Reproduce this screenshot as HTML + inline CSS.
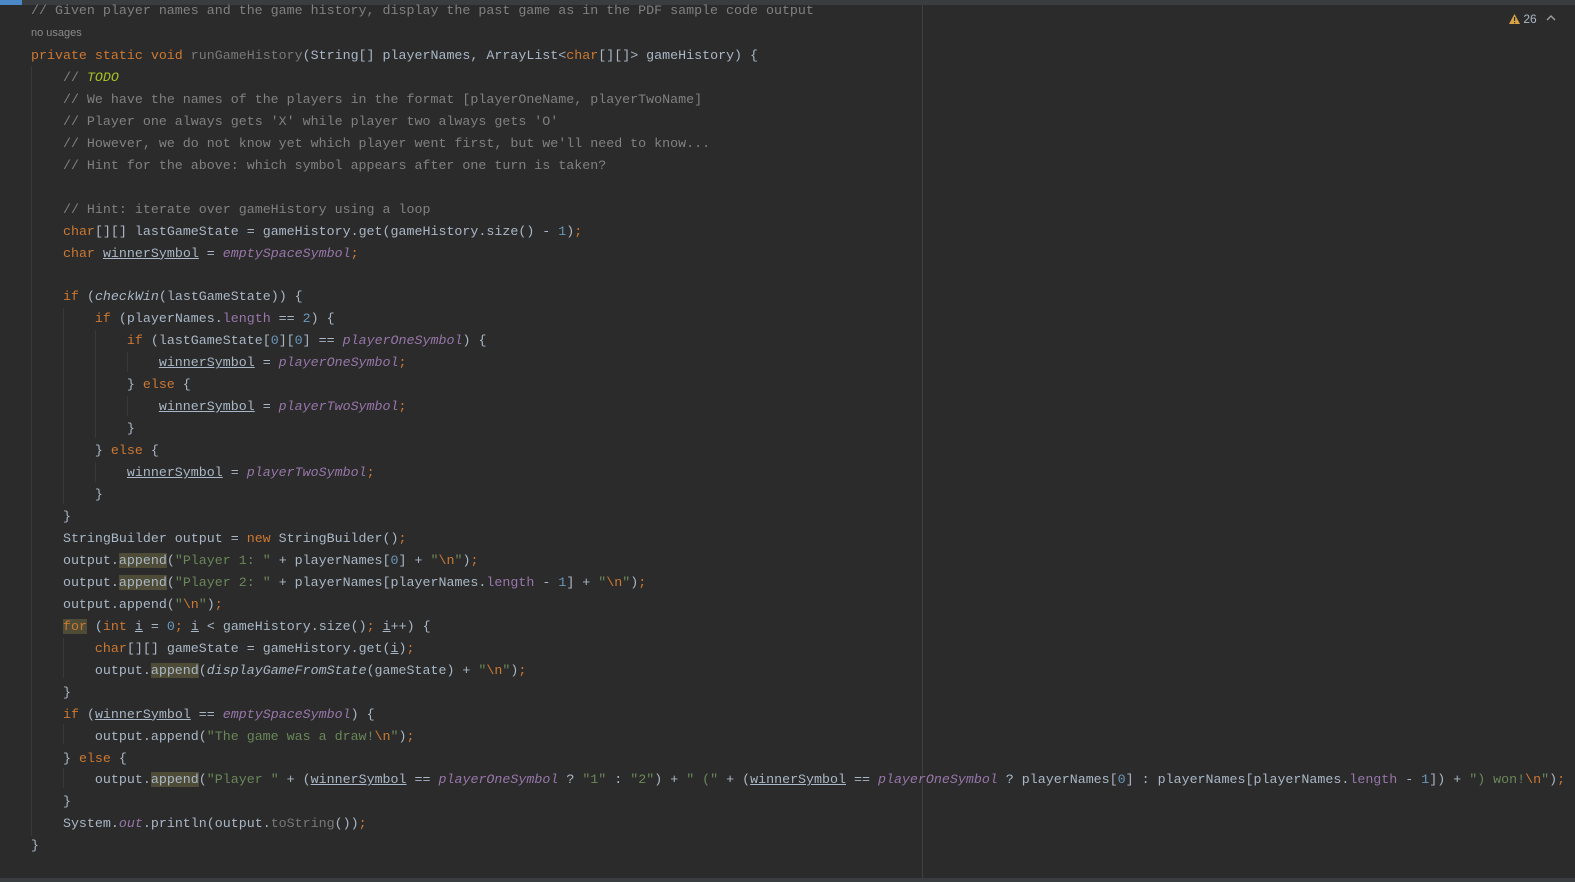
<!DOCTYPE html>
<html><head><meta charset="utf-8"><style>
html,body{margin:0;padding:0;background:#2b2b2b;width:1575px;height:882px;overflow:hidden;position:relative}
.top{position:absolute;left:0;top:0;width:1575px;height:5px;background:#3a3d40}
.topb{position:absolute;left:0;top:0;width:22px;height:5px;background:#4a88c7}
.bot{position:absolute;left:0;top:878px;width:1575px;height:4px;background:#3a3d40}
.margin{position:absolute;left:922px;top:5px;width:1px;height:873px;background:#3f3f3f}
.g{position:absolute;width:1px;background:#393939}
pre,.l{font-family:"Liberation Mono",monospace;font-size:13.32px;color:#a9b7c6;margin:0;white-space:pre}
pre{position:absolute;left:31px;top:45px;line-height:21.95px}
.l{position:absolute;left:31px;line-height:22px}
.hint{position:absolute;left:31px;top:27px;font-family:"Liberation Sans",sans-serif;font-size:11px;color:#8a8a8a}
.k{color:#cc7832}.c{color:#808080}.s{color:#6a8759}.n{color:#6897bb}.f{color:#9876aa;font-style:italic}.m{color:#9876aa}
.t{color:#a8c023;font-style:italic}.u{color:#787878}.i{font-style:italic}.ul{text-decoration:underline}
.h{background:#4e4c37}.hk{background:#4e4c37;color:#cc7832}
.warn{position:absolute;left:1509px;top:12px;font-family:"Liberation Sans",sans-serif;font-size:12px;color:#a9b7c6}
</style></head><body>
<div class="top"></div><div class="topb"></div><div class="bot"></div><div class="margin"></div>
<div class="g" style="left:31px;top:66px;height:770px"></div>
<div class="g" style="left:63px;top:308px;height:196px"></div>
<div class="g" style="left:95px;top:330px;height:108px"></div>
<div class="g" style="left:127px;top:352px;height:20px"></div>
<div class="g" style="left:127px;top:396px;height:20px"></div>
<div class="g" style="left:95px;top:462px;height:20px"></div>
<div class="g" style="left:63px;top:638px;height:40px"></div>
<div class="g" style="left:63px;top:724px;height:20px"></div>
<div class="g" style="left:63px;top:768px;height:20px"></div>
<div class="warn"><svg width="11" height="10" viewBox="0 0 11 10" style="vertical-align:-1px"><path d="M5.5 0L11 10H0Z" fill="#d9a343"/><rect x="5" y="3" width="1.2" height="4" fill="#2b2b2b"/><rect x="5" y="8" width="1.2" height="1.2" fill="#2b2b2b"/></svg> 26</div>
<svg style="position:absolute;left:1546px;top:14px" width="10" height="7" viewBox="0 0 10 7"><path d="M1 6L5 2L9 6" stroke="#a0a0a0" stroke-width="1.4" fill="none"/></svg>
<div class="l c" style="top:0">// Given player names and the game history, display the past game as in the PDF sample code output</div>
<div class="hint">no usages</div>
<pre><span class="k">private static void</span> <span class="u">runGameHistory</span>(String[] playerNames, ArrayList&lt;<span class="k">char</span>[][]&gt; gameHistory) {
    <span class="c">// </span><span class="t">TODO</span>
    <span class="c">// We have the names of the players in the format [playerOneName, playerTwoName]</span>
    <span class="c">// Player one always gets 'X' while player two always gets 'O'</span>
    <span class="c">// However, we do not know yet which player went first, but we'll need to know...</span>
    <span class="c">// Hint for the above: which symbol appears after one turn is taken?</span>

    <span class="c">// Hint: iterate over gameHistory using a loop</span>
    <span class="k">char</span>[][] lastGameState = gameHistory.get(gameHistory.size() - <span class="n">1</span>)<span class="k">;</span>
    <span class="k">char</span> <span class="ul">winnerSymbol</span> = <span class="f">emptySpaceSymbol</span><span class="k">;</span>

    <span class="k">if</span> (<span class="i">checkWin</span>(lastGameState)) {
        <span class="k">if</span> (playerNames.<span class="m">length</span> == <span class="n">2</span>) {
            <span class="k">if</span> (lastGameState[<span class="n">0</span>][<span class="n">0</span>] == <span class="f">playerOneSymbol</span>) {
                <span class="ul">winnerSymbol</span> = <span class="f">playerOneSymbol</span><span class="k">;</span>
            } <span class="k">else</span> {
                <span class="ul">winnerSymbol</span> = <span class="f">playerTwoSymbol</span><span class="k">;</span>
            }
        } <span class="k">else</span> {
            <span class="ul">winnerSymbol</span> = <span class="f">playerTwoSymbol</span><span class="k">;</span>
        }
    }
    StringBuilder output = <span class="k">new</span> StringBuilder()<span class="k">;</span>
    output.<span class="h">append</span>(<span class="s">"Player 1: "</span> + playerNames[<span class="n">0</span>] + <span class="s">"<span class="k">\n</span>"</span>)<span class="k">;</span>
    output.<span class="h">append</span>(<span class="s">"Player 2: "</span> + playerNames[playerNames.<span class="m">length</span> - <span class="n">1</span>] + <span class="s">"<span class="k">\n</span>"</span>)<span class="k">;</span>
    output.append(<span class="s">"<span class="k">\n</span>"</span>)<span class="k">;</span>
    <span class="hk">for</span> (<span class="k">int</span> <span class="ul">i</span> = <span class="n">0</span><span class="k">;</span> <span class="ul">i</span> &lt; gameHistory.size()<span class="k">;</span> <span class="ul">i</span>++) {
        <span class="k">char</span>[][] gameState = gameHistory.get(<span class="ul">i</span>)<span class="k">;</span>
        output.<span class="h">append</span>(<span class="i">displayGameFromState</span>(gameState) + <span class="s">"<span class="k">\n</span>"</span>)<span class="k">;</span>
    }
    <span class="k">if</span> (<span class="ul">winnerSymbol</span> == <span class="f">emptySpaceSymbol</span>) {
        output.append(<span class="s">"The game was a draw!<span class="k">\n</span>"</span>)<span class="k">;</span>
    } <span class="k">else</span> {
        output.<span class="h">append</span>(<span class="s">"Player "</span> + (<span class="ul">winnerSymbol</span> == <span class="f">playerOneSymbol</span> ? <span class="s">"1"</span> : <span class="s">"2"</span>) + <span class="s">" ("</span> + (<span class="ul">winnerSymbol</span> == <span class="f">playerOneSymbol</span> ? playerNames[<span class="n">0</span>] : playerNames[playerNames.<span class="m">length</span> - <span class="n">1</span>]) + <span class="s">") won!<span class="k">\n</span>"</span>)<span class="k">;</span>
    }
    System.<span class="f">out</span>.println(output.<span class="u">toString</span>())<span class="k">;</span>
}</pre>
</body></html>
